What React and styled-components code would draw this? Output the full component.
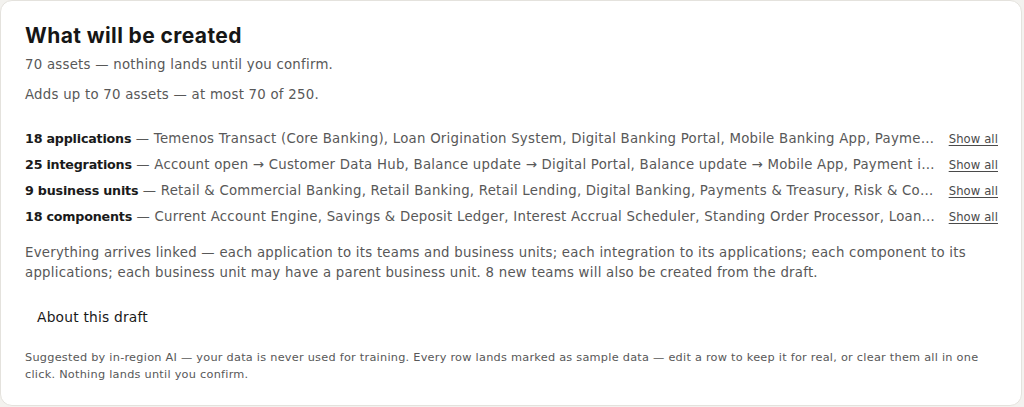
import React from "react";
import styled, { createGlobalStyle } from "styled-components";

const GlobalStyle = createGlobalStyle`
  html, body {
    margin: 0;
    padding: 0;
    background: #f3f2ef;
  }
  * {
    box-sizing: border-box;
  }
`;

const Card = styled.section`
  width: 1022px;
  background: #fff;
  border: 1px solid #e4e2dd;
  border-radius: 12px;
  padding: 23px 23px 22px 24px;
  font-family: "DejaVu Sans", "Open Sans", sans-serif;
  color: #585858;
  letter-spacing: 0.25px;
`;

const Title = styled.h2`
  margin: 0;
  font-family: "Inter", "Liberation Sans", sans-serif;
  font-size: 21px;
  line-height: 24px;
  font-weight: 700;
  color: #161616;
  letter-spacing: 0.4px;
`;

const Lead = styled.p`
  margin: ${(props) => props.$top || 0}px 0 0;
  font-size: 13.3px;
  line-height: 20px;
`;

const Rows = styled.div`
  margin-top: 21px;
  display: flex;
  flex-direction: column;
`;

const Row = styled.div`
  display: grid;
  grid-template-columns: minmax(0, 1fr) auto;
  align-items: center;
  column-gap: 12px;
  height: 26px;
`;

const Summary = styled.div`
  white-space: nowrap;
  overflow: hidden;
  text-overflow: ellipsis;
  font-size: 13.3px;
  line-height: 26px;
`;

const Count = styled.strong`
  font-size: 12.7px;
  font-weight: 700;
  letter-spacing: -0.2px;
  color: #1a1a1a;
`;

const ShowAll = styled.button`
  border: 0;
  background: none;
  padding: 0;
  font-family: inherit;
  font-size: 11.6px;
  letter-spacing: 0.1px;
  color: #4a4a4a;
  text-decoration: underline;
  text-underline-offset: 2px;
  cursor: pointer;
`;

const Note = styled.p`
  margin: 13px 0 0;
  font-size: 13.3px;
  line-height: 20px;
`;

const DraftButton = styled.button`
  margin-top: 16px;
  display: block;
  border: 0;
  background: none;
  padding: 8px 12px;
  font-family: inherit;
  font-size: 13.8px;
  line-height: 20px;
  font-weight: 400;
  letter-spacing: 0.2px;
  color: #1a1a1a;
  cursor: pointer;
`;

const Fine = styled.p`
  margin: 14px 0 0;
  font-size: 11.3px;
  line-height: 17px;
`;

const groups = [
  {
    count: "18 applications",
    items:
      "Temenos Transact (Core Banking), Loan Origination System, Digital Banking Portal, Mobile Banking App, Payment Gateway, Card Management System",
  },
  {
    count: "25 integrations",
    items:
      "Account open → Customer Data Hub, Balance update → Digital Portal, Balance update → Mobile App, Payment initiation → Payment Gateway",
  },
  {
    count: "9 business units",
    items:
      "Retail & Commercial Banking, Retail Banking, Retail Lending, Digital Banking, Payments & Treasury, Risk & Compliance, Operations",
  },
  {
    count: "18 components",
    items:
      "Current Account Engine, Savings & Deposit Ledger, Interest Accrual Scheduler, Standing Order Processor, Loan Servicing Engine",
  },
];

export default function App() {
  return (
    <>
      <GlobalStyle />
      <Card>
        <Title>What will be created</Title>
        <Lead $top={7}>70 assets — nothing lands until you confirm.</Lead>
        <Lead $top={10}>Adds up to 70 assets — at most 70 of 250.</Lead>
        <Rows>
          {groups.map((g) => (
            <Row key={g.count}>
              <Summary>
                <Count>{g.count}</Count> — {g.items}
              </Summary>
              <ShowAll>Show all</ShowAll>
            </Row>
          ))}
        </Rows>
        <Note>
          Everything arrives linked — each application to its teams and business
          units; each integration to its applications; each component to its
          applications; each business unit may have a parent business unit. 8 new
          teams will also be created from the draft.
        </Note>
        <DraftButton>About this draft</DraftButton>
        <Fine>
          Suggested by in-region AI — your data is never used for training. Every
          row lands marked as sample data — edit a row to keep it for real, or
          clear them all in one click. Nothing lands until you confirm.
        </Fine>
      </Card>
    </>
  );
}
